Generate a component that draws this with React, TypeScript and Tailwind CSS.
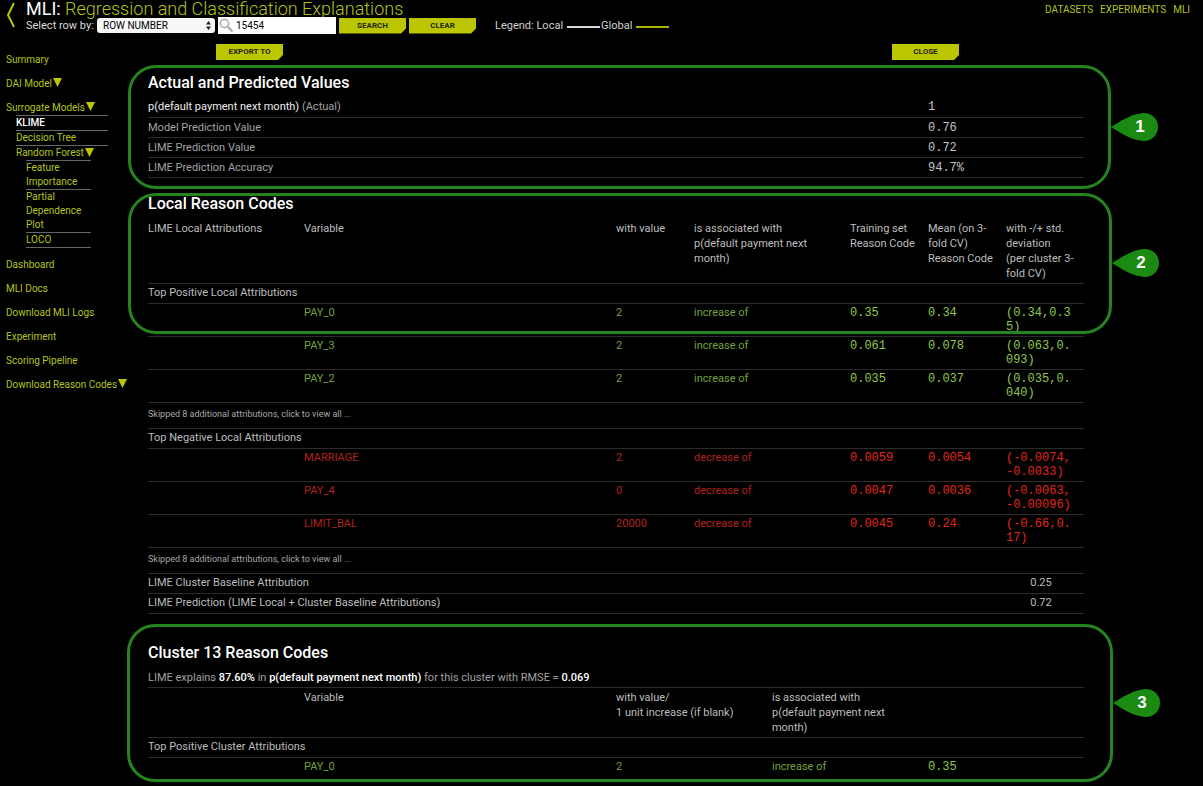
import type { ReactNode } from 'react';

const CUT = '[clip-path:polygon(0_0,100%_0,100%_calc(100%-5px),calc(100%-5px)_100%,0_100%)]';
const CELL = 'pt-[3px] pr-2 align-top leading-[14px]';
const CODE_CELL = 'pt-0.5 pr-2 align-top leading-[14px]';
const HEAD = 'pr-1 align-top text-left font-normal leading-[15px] text-[#bdbdbd]';
const NUM = "font-['Liberation_Mono',monospace] text-[12px] break-all";
const ROW = 'border-b border-[#2c2c2c]';

function LimeButton({ children }: { children: ReactNode }) {
  return (
    <button
      type="button"
      className={`h-4 w-[67px] shrink-0 bg-[#bcc600] text-[8px] leading-4 font-bold text-[#22260a] ${CUT}`}
    >
      {children}
    </button>
  );
}

function Frame({ n, className }: { n: number; className: string }) {
  return (
    <div className={`pointer-events-none absolute rounded-[28px] border-[3px] border-[#25841f] ${className}`}>
      <div className="absolute top-1/2 left-full ml-[3px] h-7 w-12 -translate-y-1/2">
        <svg viewBox="0 0 48 28" className="h-7 w-12" aria-hidden="true">
          <path d="M0 14C8 9 22 0 33 0a14 14 0 0 1 0 28C22 28 8 19 0 14z" fill="#1b8a13" />
        </svg>
        <span className="absolute inset-0 pl-2.5 text-center font-['Liberation_Sans',sans-serif] text-[17px] leading-7 font-bold text-white">
          {n}
        </span>
      </div>
    </div>
  );
}

function Heading({ children }: { children: ReactNode }) {
  return <h2 className="h-[25px] text-[16px] leading-[22px] font-medium text-white">{children}</h2>;
}

function Cols() {
  return (
    <colgroup>
      <col className="w-2/12" />
      <col className="w-4/12" />
      <col className="w-1/12" />
      <col className="w-2/12" />
      <col className="w-1/12" />
      <col className="w-1/12" />
      <col className="w-1/12" />
    </colgroup>
  );
}

function Triangle() {
  return (
    <svg viewBox="0 0 9 9" className="mb-0.5 ml-px size-[9px]" aria-hidden="true">
      <path d="M0 0h9L4.500 9z" fill="#bcc600" />
    </svg>
  );
}

const predictions = [
  ['Model Prediction Value', '0.76'],
  ['LIME Prediction Value', '0.72'],
  ['LIME Prediction Accuracy', '94.7%'],
];

const positive = [
  ['PAY_0', '2', '0.35', '0.34', '(0.34,0.35)'],
  ['PAY_3', '2', '0.061', '0.078', '(0.063,0.093)'],
  ['PAY_2', '2', '0.035', '0.037', '(0.035,0.040)'],
];

const negative = [
  ['MARRIAGE', '2', '0.0059', '0.0054', '(-0.0074,-0.0033)'],
  ['PAY_4', '0', '0.0047', '0.0036', '(-0.0063,-0.00096)'],
  ['LIMIT_BAL', '20000', '0.0045', '0.24', '(-0.66,0.17)'],
];

function CodeRows({ rows, up }: { rows: string[][]; up: boolean }) {
  const text = up ? 'text-[#74a03f]' : 'text-[#b3211d]';
  const num = up ? 'text-[#8fc94b]' : 'text-[#e3261d]';
  return (
    <>
      {rows.map(([name, value, train, mean, dev]) => (
        <tr key={name} className={`h-[33px] ${ROW} ${text}`}>
          <td />
          <td className={CODE_CELL}>{name}</td>
          <td className={CODE_CELL}>{value}</td>
          <td className={CODE_CELL}>{up ? 'increase of' : 'decrease of'}</td>
          <td className={`${CODE_CELL} ${NUM} ${num}`}>{train}</td>
          <td className={`${CODE_CELL} ${NUM} ${num}`}>{mean}</td>
          <td className={`${CODE_CELL} ${NUM} ${num}`}>{dev}</td>
        </tr>
      ))}
    </>
  );
}

function GroupRow({ children }: { children: ReactNode }) {
  return (
    <tr className={`h-5 ${ROW}`}>
      <th colSpan={7} className="pt-0.5 text-left align-top leading-[14px] font-normal text-[#bdbdbd]">
        {children}
      </th>
    </tr>
  );
}

function SkippedRow() {
  return (
    <tr className={`h-[26px] ${ROW}`}>
      <td colSpan={7} className="pt-1 align-top">
        <button type="button" className="block text-[9px] leading-[14px] text-[#a8a8a8]">
          Skipped 8 additional attributions, click to view all ...
        </button>
      </td>
    </tr>
  );
}

function SideLink({ children }: { children: ReactNode }) {
  return (
    <li>
      <a href="#" className="flex h-4 items-center">
        {children}
      </a>
    </li>
  );
}

export default function App() {
  return (
    <div className="min-h-screen bg-black font-[Roboto,sans-serif] text-[11px] text-[#a3a3a3]">
      <header className="flex h-[34px]">
        <a href="#" aria-label="Back" className="w-[26px] shrink-0 pt-0.5 pl-1.5">
          <svg viewBox="0 0 9 26" className="h-[26px] w-[9px]" fill="none" stroke="#bcc600" strokeWidth="2">
            <path d="M8 1L2 13l6 12" />
          </svg>
        </a>
        <div className="min-w-0 flex-1">
          <h1 className="h-[17px] text-[18px] leading-[18px] font-light whitespace-nowrap text-[#b5c21c]">
            <span className="font-normal text-white">MLI:</span> Regression and Classification Explanations
          </h1>
          <form className="flex h-[17px] items-center whitespace-nowrap" onSubmit={(e) => e.preventDefault()}>
            <label htmlFor="row-by" className="w-[71px] shrink-0 pt-0.5 text-[#dcdcdc]">
              Select row by:
            </label>
            <div className="relative w-[118px] shrink-0">
              <select
                id="row-by"
                className="block h-[15px] w-full appearance-none rounded-[3px] bg-[#f7f7f7] pl-1.5 text-[10px] leading-[15px] text-black"
              >
                <option>ROW NUMBER</option>
              </select>
              <svg viewBox="0 0 5 9" className="pointer-events-none absolute top-[3px] right-1 h-[9px] w-[5px]" aria-hidden="true">
                <path d="M0 3.500L2.500 0 5 3.500zM0 5.500h5L2.500 9z" fill="#222" />
              </svg>
            </div>
            <div className="relative ml-[3px] w-[118px] shrink-0">
              <input
                aria-label="Row number"
                defaultValue="15454"
                className="block h-[17px] w-full bg-white pl-[18px] text-[10px] text-black"
              />
              <svg viewBox="0 0 15 15" className="pointer-events-none absolute top-px left-px size-[15px]" fill="none" stroke="#b3b3b3" aria-hidden="true">
                <circle cx="5.500" cy="5.500" r="4.200" strokeWidth="1.800" />
                <path d="M8.800 8.800l4.700 4.700" strokeWidth="2.400" />
              </svg>
            </div>
            <div className="ml-[3px] flex gap-[3px]">
              <LimeButton>SEARCH</LimeButton>
              <LimeButton>CLEAR</LimeButton>
            </div>
            <div className="ml-[19px] flex items-center pt-0.5 text-[#d0d0d0]">
              Legend: Local
              <span className="mr-px ml-1 h-0.5 w-[33px] bg-[#d8d8d8]" />
              Global
              <span className="ml-1 h-0.5 w-[33px] bg-[#aab400]" />
            </div>
          </form>
        </div>
        <nav className="flex gap-[7px] pt-0.5 pr-[13px] text-[10px] leading-4 text-[#b5c21c]">
          <a href="#">DATASETS</a>
          <a href="#">EXPERIMENTS</a>
          <a href="#">MLI</a>
        </nav>
      </header>

      <div className="flex pt-2.5">
        <aside className="w-[148px] shrink-0 pt-[7px] pl-1.5 text-[10px] whitespace-nowrap text-[#b7c31a]">
          <ul className="flex flex-col gap-2">
            <SideLink>Summary</SideLink>
            <SideLink>
              DAI Model
              <Triangle />
            </SideLink>
            <li>
              <a href="#" className="flex h-4 items-center">
                Surrogate Models
                <Triangle />
              </a>
              <ul className="ml-2.5 w-[92px]">
                <li className="h-[15px] border-t border-[#666] leading-[14px] font-medium text-white">
                  <a href="#">KLIME</a>
                </li>
                <li className="h-[15px] border-t border-[#666] leading-[14px]">
                  <a href="#">Decision Tree</a>
                </li>
                <li className="border-t border-[#666] leading-[14px]">
                  <a href="#" className="flex h-[14px] items-center">
                    Random Forest
                    <Triangle />
                  </a>
                  <ul className="ml-2.5 w-[65px] border-b border-[#666]">
                    <li className="border-t border-[#666]">
                      <a href="#">
                        Feature
                        <br />
                        Importance
                      </a>
                    </li>
                    <li className="border-t border-[#666]">
                      <a href="#">
                        Partial
                        <br />
                        Dependence
                        <br />
                        Plot
                      </a>
                    </li>
                    <li className="border-t border-[#666]">
                      <a href="#">LOCO</a>
                    </li>
                  </ul>
                </li>
              </ul>
            </li>
            <SideLink>Dashboard</SideLink>
            <SideLink>MLI Docs</SideLink>
            <SideLink>Download MLI Logs</SideLink>
            <SideLink>Experiment</SideLink>
            <SideLink>Scoring Pipeline</SideLink>
            <SideLink>
              Download Reason Codes
              <Triangle />
            </SideLink>
          </ul>
        </aside>

        <main className="mr-[119px] min-w-0 flex-1">
          <div className="flex justify-between pr-[125px] pl-[68px]">
            <LimeButton>EXPORT TO</LimeButton>
            <LimeButton>CLOSE</LimeButton>
          </div>

          <section className="relative pt-3">
            <Heading>Actual and Predicted Values</Heading>
            <table className="w-full table-fixed">
              <colgroup>
                <col className="w-10/12" />
                <col className="w-2/12" />
              </colgroup>
              <tbody>
                <tr className={`h-5 ${ROW}`}>
                  <td className={CELL}>
                    <span className="text-[#ededed]">p(default payment next month)</span> (Actual)
                  </td>
                  <td className={`${CELL} ${NUM} text-[#c4c4c4]`}>1</td>
                </tr>
                {predictions.map(([label, value]) => (
                  <tr key={label} className={`h-5 ${ROW}`}>
                    <td className={CELL}>{label}</td>
                    <td className={`${CELL} ${NUM} text-[#c4c4c4]`}>{value}</td>
                  </tr>
                ))}
              </tbody>
            </table>
            <Frame n={1} className="top-[5px] right-[-27px] left-[-20px] h-[124px]" />
          </section>

          <section className="relative mt-[15px]">
            <Heading>Local Reason Codes</Heading>
            <table className="w-full table-fixed">
              <Cols />
              <thead>
                <tr className={`h-[66px] ${ROW}`}>
                  <th className={`${HEAD} pt-[3px]`}>LIME Local Attributions</th>
                  <th className={`${HEAD} pt-[3px]`}>Variable</th>
                  <th className={`${HEAD} pt-[3px]`}>with value</th>
                  <th className={`${HEAD} pt-[3px]`}>
                    is associated with
                    <br />
                    p(default payment next
                    <br />
                    month)
                  </th>
                  <th className={`${HEAD} pt-[3px] whitespace-nowrap`}>
                    Training set
                    <br />
                    Reason Code
                  </th>
                  <th className={`${HEAD} pt-[3px] whitespace-nowrap`}>
                    Mean (on 3-
                    <br />
                    fold CV)
                    <br />
                    Reason Code
                  </th>
                  <th className={`${HEAD} pt-[3px] whitespace-nowrap`}>
                    with -/+ std.
                    <br />
                    deviation
                    <br />
                    (per cluster 3-
                    <br />
                    fold CV)
                  </th>
                </tr>
              </thead>
              <tbody>
                <GroupRow>Top Positive Local Attributions</GroupRow>
                <CodeRows rows={positive} up />
                <SkippedRow />
                <GroupRow>Top Negative Local Attributions</GroupRow>
                <CodeRows rows={negative} up={false} />
                <SkippedRow />
                <tr className={`h-5 ${ROW} text-[#bdbdbd]`}>
                  <td colSpan={6} className={CODE_CELL}>
                    LIME Cluster Baseline Attribution
                  </td>
                  <td className={`${CODE_CELL} text-center`}>0.25</td>
                </tr>
                <tr className={`h-5 ${ROW} text-[#bdbdbd]`}>
                  <td colSpan={6} className={CODE_CELL}>
                    LIME Prediction (LIME Local + Cluster Baseline Attributions)
                  </td>
                  <td className={`${CODE_CELL} text-center`}>0.72</td>
                </tr>
              </tbody>
            </table>
            <Frame n={2} className="top-0 right-[-28px] left-[-20px] h-[141px]" />
          </section>

          <section className="relative pt-7">
            <Heading>Cluster 13 Reason Codes</Heading>
            <p className={`h-[21px] leading-[22px] ${ROW}`}>
              LIME explains <span className="font-medium text-white">87.60%</span> in{' '}
              <span className="font-medium text-white">p(default payment next month)</span> for this cluster with RMSE ={' '}
              <span className="font-medium text-white">0.069</span>
            </p>
            <table className="w-full table-fixed">
              <colgroup>
                <col className="w-2/12" />
                <col className="w-4/12" />
                <col className="w-2/12" />
                <col className="w-2/12" />
                <col className="w-2/12" />
              </colgroup>
              <thead>
                <tr className={`h-[49px] ${ROW}`}>
                  <td />
                  <th className={`${HEAD} pt-0.5`}>Variable</th>
                  <th className={`${HEAD} pt-0.5`}>
                    with value/
                    <br />1 unit increase (if blank)
                  </th>
                  <th className={`${HEAD} pt-0.5`}>
                    is associated with
                    <br />
                    p(default payment next
                    <br />
                    month)
                  </th>
                  <td />
                </tr>
              </thead>
              <tbody>
                <GroupRow>Top Positive Cluster Attributions</GroupRow>
                <tr className="h-5 text-[#74a03f]">
                  <td />
                  <td className={CODE_CELL}>PAY_0</td>
                  <td className={CODE_CELL}>2</td>
                  <td className={CODE_CELL}>increase of</td>
                  <td className={`${CODE_CELL} ${NUM} text-[#8fc94b]`}>0.35</td>
                </tr>
              </tbody>
            </table>
            <Frame n={3} className="top-[10px] right-[-29px] left-[-21px] h-[158px]" />
          </section>
        </main>
      </div>
    </div>
  );
}
